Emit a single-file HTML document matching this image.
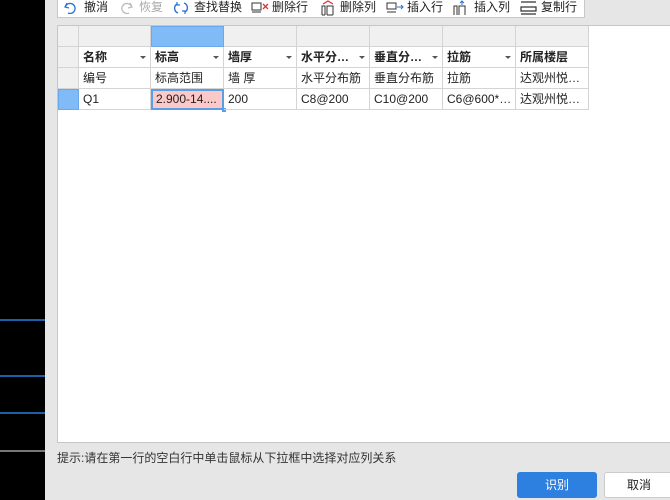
<!DOCTYPE html>
<html><head><meta charset="utf-8"><style>
*{margin:0;padding:0;box-sizing:border-box}
body{width:670px;height:500px;overflow:hidden;background:#e6e6e6;font-family:"Liberation Sans","Noto Sans CJK SC",sans-serif;font-size:12px;color:#222;position:relative}
.a{position:absolute}
.blk{left:0;top:0;width:45px;height:500px;background:#000}
.tb{left:57px;top:0;width:528px;height:18px;background:#fff;border:1px solid #c8c8c8;border-top:none}
.t{top:-1px;line-height:16px;font-size:12px;color:#222;white-space:nowrap}
.panel{left:57px;top:25px;width:620px;height:418px;background:#fff;border:1px solid #c6c6c6}
.c{position:absolute;border-right:1px solid #d4d4d4;border-bottom:1px solid #d4d4d4;padding-left:4px;line-height:20px;white-space:nowrap;overflow:hidden}
.h{background:#f0f0f0}
.b{font-weight:bold}
.arr{position:absolute;right:4px;top:9px;border-left:3px solid transparent;border-right:3px solid transparent;border-top:3px solid #555}
</style></head><body>
<div class="a blk"></div>
<div class="a" style="left:0;top:319px;width:45px;height:2px;background:#1d5ea8"></div>
<div class="a" style="left:0;top:375px;width:45px;height:2px;background:#1d5ea8"></div>
<div class="a" style="left:0;top:412px;width:45px;height:2px;background:#1d5ea8"></div>
<div class="a" style="left:0;top:450px;width:45px;height:2px;background:#777"></div>

<div class="a tb"></div>
<svg class="a" style="left:62px;top:0" width="16" height="16"><path d="M5 3 L3 7 L7 8 M3.5 6.5 A5 5 0 1 1 6 13" fill="none" stroke="#2a72d4" stroke-width="1.3"/></svg>
<div class="a t" style="left:84px">撤消</div>
<svg class="a" style="left:119px;top:0" width="16" height="16"><path d="M11 3 L13 7 L9 8 M12.5 6.5 A5 5 0 1 0 10 13" fill="none" stroke="#bbb" stroke-width="1.3"/></svg>
<div class="a t" style="left:139px;color:#aaa">恢复</div>
<svg class="a" style="left:173px;top:0" width="16" height="16"><path d="M4 4 A5 5 0 0 0 5 13 M12 12 A5 5 0 0 0 11 3" fill="none" stroke="#2a72d4" stroke-width="1.4"/><path d="M4 2v3h3M12 14v-3h-3" fill="none" stroke="#2a72d4" stroke-width="1.2"/></svg>
<div class="a t" style="left:194px">查找替换</div>
<svg class="a" style="left:251px;top:0" width="20" height="16"><rect x="1" y="3" width="9" height="7" fill="none" stroke="#333"/><path d="M1 12h9" stroke="#333"/><path d="M12 4l5 5M17 4l-5 5" stroke="#e03030" stroke-width="1.3"/></svg>
<div class="a t" style="left:272px">删除行</div>
<svg class="a" style="left:320px;top:0" width="16" height="16"><path d="M2 15V6h3v9M2 15h3M7 15V6h6v9M7 15h6" fill="none" stroke="#333"/><path d="M3 4l5-3 5 3" fill="none" stroke="#e03030" stroke-width="1.2"/></svg>
<div class="a t" style="left:340px">删除列</div>
<svg class="a" style="left:386px;top:0" width="20" height="16"><rect x="1" y="3" width="9" height="6" fill="none" stroke="#333"/><path d="M1 12h9" stroke="#333"/><path d="M11 7h6M15 5l2 2-2 2" fill="none" stroke="#2a72d4"/></svg>
<div class="a t" style="left:407px">插入行</div>
<svg class="a" style="left:452px;top:0" width="16" height="16"><path d="M2 15V6h3v9M7 15V6h6v9" fill="none" stroke="#333"/><path d="M10 1v4M8 3l2-2 2 2" fill="none" stroke="#2a72d4"/></svg>
<div class="a t" style="left:474px">插入列</div>
<svg class="a" style="left:520px;top:0" width="18" height="16"><path d="M1 2h15M1 7h15v4H1z M1 14h15" fill="none" stroke="#333" stroke-width="1.2"/></svg>
<div class="a t" style="left:541px">复制行</div>

<div class="a panel">
<!-- row 0 -->
<div class="c h" style="left:0;top:0;width:21px;height:21px"></div>
<div class="c h" style="left:21px;top:0;width:72px;height:21px"></div>
<div class="c" style="left:93px;top:0;width:73px;height:21px;background:#80bbf8;border:1px solid #6aa8ee"></div>
<div class="c h" style="left:166px;top:0;width:73px;height:21px"></div>
<div class="c h" style="left:239px;top:0;width:73px;height:21px"></div>
<div class="c h" style="left:312px;top:0;width:73px;height:21px"></div>
<div class="c h" style="left:385px;top:0;width:73px;height:21px"></div>
<div class="c h" style="left:458px;top:0;width:73px;height:21px"></div>
<!-- row 1 -->
<div class="c h" style="left:0;top:21px;width:21px;height:21px"></div>
<div class="c b" style="left:21px;top:21px;width:72px;height:21px">名称<i class="arr"></i></div>
<div class="c b" style="left:93px;top:21px;width:73px;height:21px">标高<i class="arr"></i></div>
<div class="c b" style="left:166px;top:21px;width:73px;height:21px">墙厚<i class="arr"></i></div>
<div class="c b" style="left:239px;top:21px;width:73px;height:21px">水平分…<i class="arr"></i></div>
<div class="c b" style="left:312px;top:21px;width:73px;height:21px">垂直分…<i class="arr"></i></div>
<div class="c b" style="left:385px;top:21px;width:73px;height:21px">拉筋<i class="arr"></i></div>
<div class="c b" style="left:458px;top:21px;width:73px;height:21px">所属楼层</div>
<!-- row 2 -->
<div class="c h" style="left:0;top:42px;width:21px;height:21px"></div>
<div class="c" style="left:21px;top:42px;width:72px;height:21px">编号</div>
<div class="c" style="left:93px;top:42px;width:73px;height:21px">标高范围</div>
<div class="c" style="left:166px;top:42px;width:73px;height:21px">墙 厚</div>
<div class="c" style="left:239px;top:42px;width:73px;height:21px">水平分布筋</div>
<div class="c" style="left:312px;top:42px;width:73px;height:21px">垂直分布筋</div>
<div class="c" style="left:385px;top:42px;width:73px;height:21px">拉筋</div>
<div class="c" style="left:458px;top:42px;width:73px;height:21px">达观州悦…</div>
<!-- row 3 -->
<div class="c" style="left:0;top:63px;width:21px;height:21px;background:#80bbf8;border:1px solid #6aa8ee"></div>
<div class="c" style="left:21px;top:63px;width:72px;height:21px">Q1</div>
<div class="c" style="left:93px;top:63px;width:73px;height:21px;background:#fcc8c8;border:2px solid #5a9ee8;padding-left:3px;line-height:17px">2.900-14....</div>
<div class="a" style="left:164px;top:82px;width:4px;height:4px;background:#5a9ee8"></div>
<div class="c" style="left:166px;top:63px;width:73px;height:21px">200</div>
<div class="c" style="left:239px;top:63px;width:73px;height:21px">C8@200</div>
<div class="c" style="left:312px;top:63px;width:73px;height:21px">C10@200</div>
<div class="c" style="left:385px;top:63px;width:73px;height:21px">C6@600*…</div>
<div class="c" style="left:458px;top:63px;width:73px;height:21px">达观州悦…</div>
</div>

<div class="a" style="left:57px;top:450px;line-height:16px;color:#333">提示:请在第一行的空白行中单击鼠标从下拉框中选择对应列关系</div>
<div class="a" style="left:517px;top:472px;width:80px;height:26px;background:#2d7fe0;border-radius:3px;color:#fff;text-align:center;line-height:26px">识别</div>
<div class="a" style="left:604px;top:472px;width:70px;height:26px;background:#fff;border:1px solid #ccc;border-radius:3px;text-align:center;line-height:24px">取消</div>
</body></html>
